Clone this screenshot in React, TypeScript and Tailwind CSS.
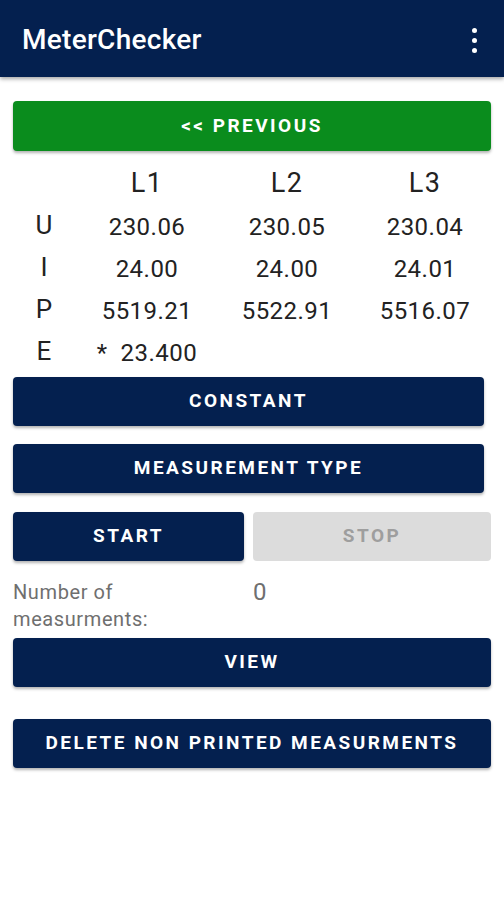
import React from "react";

const NAVY = "bg-[#04204f]";

function Btn({ label, className = "" }: { label: string; className?: string }) {
  return (
    <button
      className={`h-[49px] rounded-[4px] ${NAVY} text-white text-[19px] font-bold tracking-[0.13em] shadow-[0_2px_3px_rgba(0,0,0,0.3)] ${className}`}
    >
      {label}
    </button>
  );
}

export default function App() {
  const rows = [
    { k: "U", v: ["230.06", "230.05", "230.04"] },
    { k: "I", v: ["24.00", "24.00", "24.01"] },
    { k: "P", v: ["5519.21", "5522.91", "5516.07"] },
    { k: "E", v: ["*  23.400", "", ""] },
  ];

  return (
    <div
      className="w-[504px] h-[900px] bg-white text-[#222]"
      style={{ fontFamily: "Roboto, 'Liberation Sans', sans-serif" }}
    >
      {/* app bar */}
      <div className={`h-[77px] ${NAVY} flex items-center justify-between pl-[22px] pr-[27px] pt-[3px] shadow-[0_2px_4px_rgba(0,0,0,0.35)]`}>
        <div className="text-white text-[28px] font-medium tracking-[0.01em]">MeterChecker</div>
        <div className="flex flex-col gap-[5px]">
          <span className="w-[5px] h-[5px] rounded-full bg-white" />
          <span className="w-[5px] h-[5px] rounded-full bg-white" />
          <span className="w-[5px] h-[5px] rounded-full bg-white" />
        </div>
      </div>

      <div className="px-[13px] pt-[24px]">
        <button className="w-full h-[50px] rounded-[4px] bg-[#0a8c1d] text-white text-[19px] font-bold tracking-[0.13em] shadow-[0_2px_3px_rgba(0,0,0,0.3)]">
          &lt;&lt; PREVIOUS
        </button>

        {/* values table */}
        <div className="grid grid-cols-[62px_144px_136px_140px] mt-[11px]">
          <div className="h-[42px]" />
          <div className="h-[42px] flex items-center justify-center text-[27px] tracking-[0.05em]">L1</div>
          <div className="h-[42px] flex items-center justify-center text-[27px] tracking-[0.05em]">L2</div>
          <div className="h-[42px] flex items-center justify-center text-[27px] tracking-[0.05em]">L3</div>
          {rows.map((r) => (
            <React.Fragment key={r.k}>
              <div className="h-[42px] flex items-center justify-center text-[26px]">{r.k}</div>
              {r.v.map((x, i) => (
                <div
                  key={i}
                  className="h-[42px] flex items-center justify-center text-[24px] tracking-[0.02em] whitespace-pre pt-[3px]"
                >
                  {x}
                </div>
              ))}
            </React.Fragment>
          ))}
        </div>

        <div className="flex flex-col mt-[5px] pr-[7px] gap-[18px]">
          <Btn label="CONSTANT" />
          <Btn label="MEASUREMENT TYPE" />
        </div>

        <div className="flex gap-[9px] mt-[19px]">
          <Btn label="START" className="w-[231px]" />
          <button className="flex-1 h-[49px] rounded-[4px] bg-[#dcdcdc] text-[#9e9e9e] text-[19px] font-bold tracking-[0.13em]">
            STOP
          </button>
        </div>

        <div className="flex mt-[18px]">
          <div className="w-[240px] text-[20px] leading-[27px] tracking-[0.03em] text-[#6f6f6f]">
            Number of
            <br />
            measurments:
          </div>
          <div className="text-[24px] leading-[27px] text-[#6f6f6f]">0</div>
        </div>

        <div className="flex flex-col gap-[32px] mt-[5px]">
          <Btn label="VIEW" className="w-full" />
          <Btn label="DELETE NON PRINTED MEASURMENTS" className="w-full" />
        </div>
      </div>
    </div>
  );
}
